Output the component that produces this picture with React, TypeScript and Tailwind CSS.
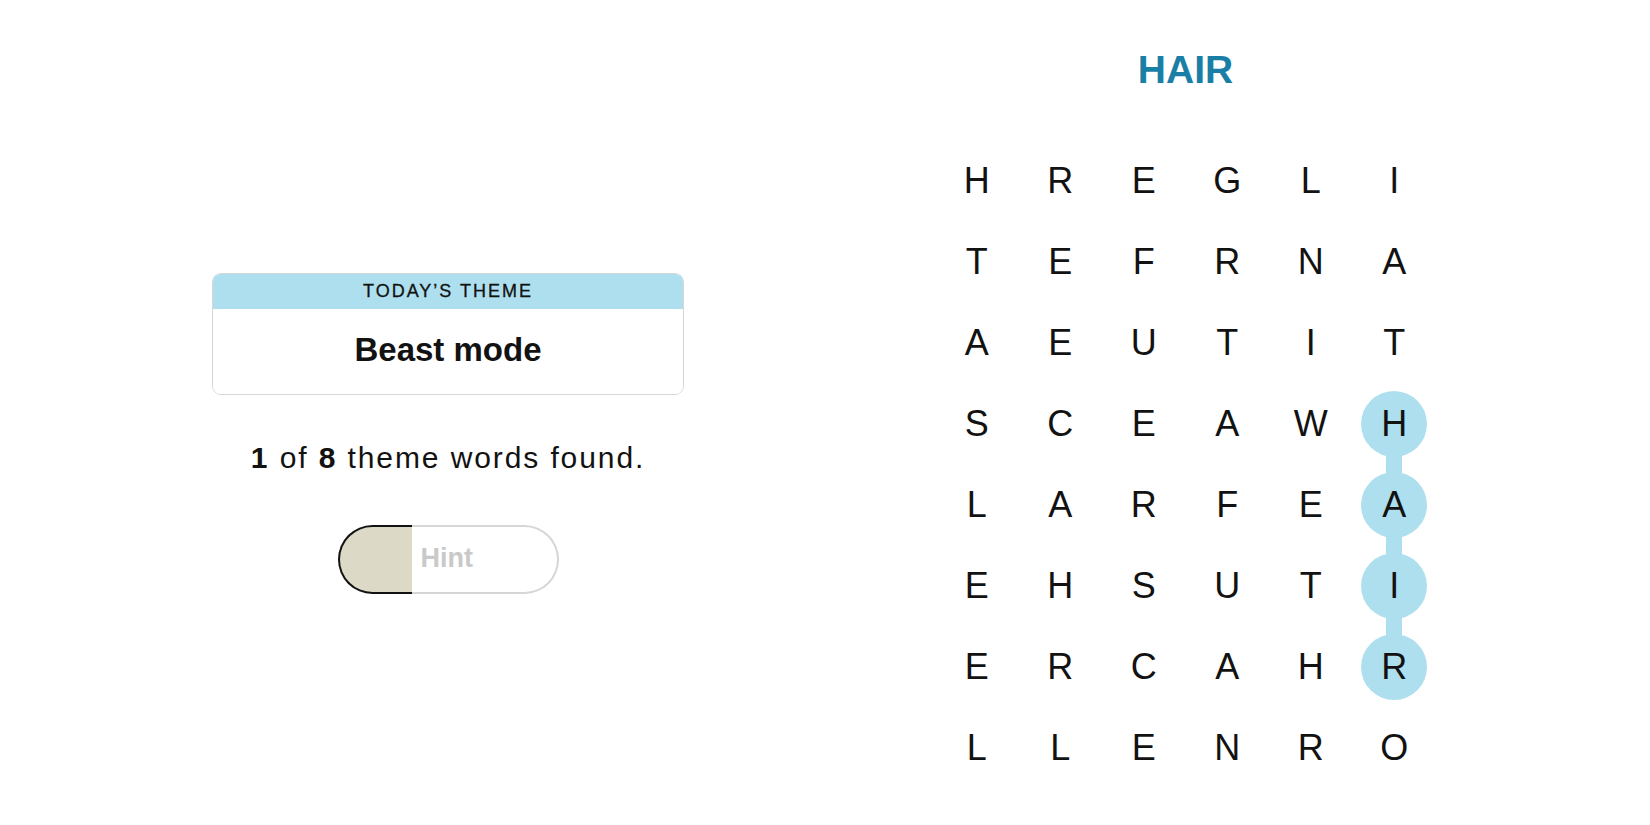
import React from "react";

const GRID = [
  "HREGLI",
  "TEFRNA",
  "AEUTIT",
  "SCEAWH",
  "LARFEA",
  "EHSUTI",
  "ERCAHR",
  "LLENRO",
];

// cells of the found word, in order (row, col)
const FOUND: [number, number][] = [
  [3, 5],
  [4, 5],
  [5, 5],
  [6, 5],
];

function isFound(r: number, c: number) {
  return FOUND.some(([fr, fc]) => fr === r && fc === c);
}

function hasNext(r: number, c: number) {
  return isFound(r, c) && isFound(r + 1, c);
}

function ThemeCard() {
  return (
    <div className="w-[472px] rounded-[9px] border border-[#d6d6d6] overflow-hidden">
      <div className="h-[35px] bg-[#aedfee] flex items-center justify-center text-[18px] tracking-[2px] text-[#121212] uppercase [-webkit-text-stroke:0.3px_#121212]">
        Today’s Theme
      </div>
      <div className="h-[85px] bg-white flex items-center justify-center pb-[4px] text-[33px] font-bold text-[#121212]">
        Beast mode
      </div>
    </div>
  );
}

function HintButton() {
  return (
    <div className="flex w-[221px] h-[69px]">
      <div className="w-[74px] h-full rounded-l-full border-2 border-r-0 border-[#121212] bg-[#dcdac7]" />
      <div className="flex-1 h-full rounded-r-full border-2 border-l-0 border-[#d6d6d6] flex items-center pl-[9px] pb-[3px] text-[27px] font-bold text-[#c9c9c9]">
        Hint
      </div>
    </div>
  );
}

function LetterGrid() {
  return (
    <div className="grid grid-cols-[repeat(6,83.5px)] auto-rows-[81px]">
      {GRID.map((row, r) =>
        row.split("").map((ch, c) => (
          <div key={`${r}-${c}`} className="relative flex items-center justify-center">
            {hasNext(r, c) && (
              <div className="absolute left-1/2 top-1/2 -translate-x-1/2 w-[16px] h-[81px] bg-[#aedfee]" />
            )}
            {isFound(r, c) && (
              <div className="absolute left-1/2 top-1/2 -translate-x-1/2 -translate-y-1/2 w-[66px] h-[66px] rounded-full bg-[#aedfee]" />
            )}
            <span className="relative text-[36px] leading-none text-[#121212]">{ch}</span>
          </div>
        ))
      )}
    </div>
  );
}

export default function App() {
  return (
    <div className="w-[1650px] h-[825px] bg-white flex font-['Liberation_Sans',Arial,sans-serif] text-[#121212]">
      <div className="w-[896px] flex flex-col items-center pt-[273px]">
        <ThemeCard />
        <p className="mt-[48px] text-[30px] leading-none tracking-[1.9px]">
          <b>1</b> of <b>8</b> theme words found.
        </p>
        <div className="mt-[52px]">
          <HintButton />
        </div>
      </div>
      <div className="pl-[39px] pt-[50px]">
        <div className="w-[501px] flex flex-col items-center">
          <h1 className="text-[39px] font-bold leading-none text-[#1a7fa6]">HAIR</h1>
          <div className="mt-[51px]">
            <LetterGrid />
          </div>
        </div>
      </div>
    </div>
  );
}
